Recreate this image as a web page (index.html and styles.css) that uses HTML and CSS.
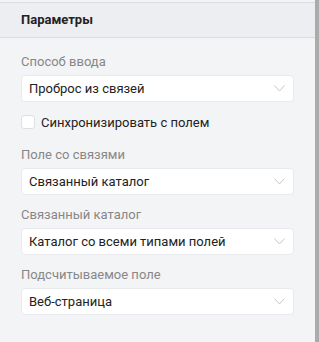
FILE: index.html
```html
<!DOCTYPE html>
<html lang="ru">
<head>
  <meta charset="UTF-8">
  <title>Параметры</title>
  <link rel="stylesheet" href="styles.css">
</head>
<body>
  <div class="panel">
    <div class="panel-head">Параметры</div>

    <div class="panel-body">
      <div class="field">
        <div class="label">Способ ввода</div>
        <div class="select">
          <span>Проброс из связей</span>
          <svg class="chevron" width="11" height="7" viewBox="0 0 11 7"><path d="M0.5 0.5 L5.5 6 L10.5 0.5" fill="none" stroke="#c4c6cb" stroke-width="1"/></svg>
        </div>
      </div>

      <label class="check">
        <span class="box"></span>
        Синхронизировать с полем
      </label>

      <div class="field">
        <div class="label">Поле со связями</div>
        <div class="select">
          <span>Связанный каталог</span>
          <svg class="chevron" width="11" height="7" viewBox="0 0 11 7"><path d="M0.5 0.5 L5.5 6 L10.5 0.5" fill="none" stroke="#c4c6cb" stroke-width="1"/></svg>
        </div>
      </div>

      <div class="field">
        <div class="label">Связанный каталог</div>
        <div class="select">
          <span>Каталог со всеми типами полей</span>
          <svg class="chevron" width="11" height="7" viewBox="0 0 11 7"><path d="M0.5 0.5 L5.5 6 L10.5 0.5" fill="none" stroke="#c4c6cb" stroke-width="1"/></svg>
        </div>
      </div>

      <div class="field">
        <div class="label">Подсчитываемое поле</div>
        <div class="select">
          <span>Веб-страница</span>
          <svg class="chevron" width="11" height="7" viewBox="0 0 11 7"><path d="M0.5 0.5 L5.5 6 L10.5 0.5" fill="none" stroke="#c4c6cb" stroke-width="1"/></svg>
        </div>
      </div>
    </div>
  </div>
</body>
</html>
```

FILE: styles.css
```css
body {
  margin: 0;
  padding: 0;
  font-family: Roboto, "Liberation Sans", sans-serif;
  background: #f3f4f6;
}

.panel {
  width: 315px;
  height: 340px;
  padding-top: 2px;
  border-right: 4px solid #ababab;
  background: #f3f4f6;
}

.panel-head {
  background: #edeef2;
  border-top: 1px solid #dcdde1;
  border-bottom: 1px solid #dcdde1;
  height: 34px;
  line-height: 34px;
  padding-left: 21px;
  font-size: 13px;
  font-weight: bold;
  color: #222;
}

.panel-body {
  padding: 16px 21px 0 21px;
}

.field {
  margin-bottom: 12px;
}

.label {
  font-size: 13px;
  line-height: 16px;
  color: #878787;
  margin-bottom: 5px;
}

.select {
  height: 27px;
  box-sizing: border-box;
  background: #fff;
  border: 1px solid #e9eaed;
  border-radius: 4px;
  padding: 0 7px 0 7px;
  display: flex;
  align-items: center;
  justify-content: space-between;
  font-size: 13px;
  color: #222;
}

.chevron {
  margin-right: 1px;
}

.check {
  display: flex;
  align-items: center;
  gap: 6px;
  font-size: 13px;
  color: #222;
  margin: 13px 0 18px 0;
  height: 14px;
}

.box {
  width: 14px;
  height: 14px;
  box-sizing: border-box;
  background: #fff;
  border: 1px solid #dedfe3;
  border-radius: 3px;
}
```
